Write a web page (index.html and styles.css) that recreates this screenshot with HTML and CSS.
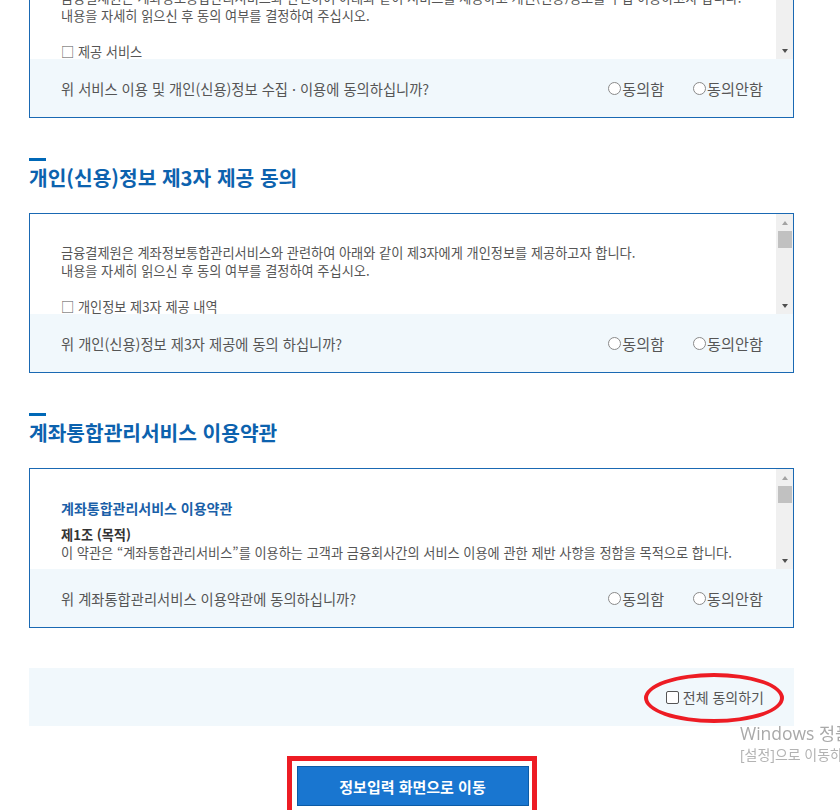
FILE: index.html
```html
<!DOCTYPE html>
<html lang="ko">
<head>
    <meta charset="UTF-8">
    <meta name="viewport" content="width=device-width, initial-scale=1.0">
    <title>계좌정보통합관리서비스 약관 동의</title>
    <link rel="stylesheet" href="styles.css">
</head>
<body>
    <div class="container">
        <form id="agreeForm">
            <section class="terms-section">
                <h3 class="section-title">개인(신용)정보 수집·이용 동의</h3>
                <div class="terms-box">
                    <div class="terms-scroll">
                        <div class="terms-body">
                            <p>금융결제원은 계좌정보통합관리서비스와 관련하여 아래와 같이 서비스를 제공하고 개인(신용)정보를 수집·이용하고자 합니다.<br>내용을 자세히 읽으신 후 동의 여부를 결정하여 주십시오.</p>
                            <p class="terms-item">□ 제공 서비스<br>
                                - 금융회사에 개설된 본인 명의 계좌의 일괄 조회<br>
                                - 비활동성 계좌의 해지 및 잔고이전<br>
                                - 자동이체 조회·해지·변경 서비스 연계</p>
                            <p class="terms-item">□ 수집·이용 목적<br>
                                - 본인확인 및 계좌정보통합관리서비스 제공</p>
                            <p class="terms-item">□ 수집·이용 항목<br>
                                - 성명, 생년월일, 휴대폰번호, 통신사, 계좌정보</p>
                            <p class="terms-item">□ 보유·이용 기간<br>
                                - 서비스 이용 종료 시까지 (관계 법령에 따라 보존이 필요한 경우 해당 기간까지)</p>
                        </div>
                        <div class="scrollbar" aria-hidden="true">
                            <span class="scroll-btn up"></span>
                            <span class="scroll-track"><span class="scroll-thumb"></span></span>
                            <span class="scroll-btn down"></span>
                        </div>
                    </div>
                    <div class="terms-agree">
                        <span class="agree-question">위 서비스 이용 및 개인(신용)정보 수집 · 이용에 동의하십니까?</span>
                        <div class="agree-options">
                            <label><input type="radio" name="agree1" value="Y">동의함</label>
                            <label><input type="radio" name="agree1" value="N">동의안함</label>
                        </div>
                    </div>
                </div>
            </section>

            <section class="terms-section">
                <h3 class="section-title">개인(신용)정보 제3자 제공 동의</h3>
                <div class="terms-box">
                    <div class="terms-scroll">
                        <div class="terms-body">
                            <p>금융결제원은 계좌정보통합관리서비스와 관련하여 아래와 같이 제3자에게 개인정보를 제공하고자 합니다.<br>내용을 자세히 읽으신 후 동의 여부를 결정하여 주십시오.</p>
                            <p class="terms-item">□ 개인정보 제3자 제공 내역<br>
                                - 제공받는 자 : 계좌정보통합관리서비스 참가 금융회사<br>
                                - 제공 목적 : 계좌정보 조회, 비활동성 계좌 해지 및 잔고이전<br>
                                - 제공 항목 : 성명, 생년월일, 휴대폰번호, 계좌번호<br>
                                - 보유 및 이용 기간 : 서비스 제공 완료 시까지</p>
                            <p class="terms-item">□ 동의를 거부할 권리 및 불이익<br>
                                - 동의를 거부하실 수 있으나, 거부 시 서비스 이용이 제한됩니다.</p>
                            <p class="terms-item">□ 기타<br>
                                - 제공된 정보는 제공 목적 외의 용도로 이용되지 않습니다.</p>
                        </div>
                        <div class="scrollbar" aria-hidden="true">
                            <span class="scroll-btn up"></span>
                            <span class="scroll-track"><span class="scroll-thumb"></span></span>
                            <span class="scroll-btn down"></span>
                        </div>
                    </div>
                    <div class="terms-agree">
                        <span class="agree-question">위 개인(신용)정보 제3자 제공에 동의 하십니까?</span>
                        <div class="agree-options">
                            <label><input type="radio" name="agree2" value="Y">동의함</label>
                            <label><input type="radio" name="agree2" value="N">동의안함</label>
                        </div>
                    </div>
                </div>
            </section>

            <section class="terms-section">
                <h3 class="section-title">계좌통합관리서비스 이용약관</h3>
                <div class="terms-box">
                    <div class="terms-scroll">
                        <div class="terms-body">
                            <p class="terms-title">계좌통합관리서비스 이용약관</p>
                            <div class="article">
                                <strong>제1조 (목적)</strong>
                                <p>이 약관은 “계좌통합관리서비스”를 이용하는 고객과 금융회사간의 서비스 이용에 관한 제반 사항을 정함을 목적으로 합니다.</p>
                            </div>
                            <div class="article">
                                <strong>제2조 (용어의 정의)</strong>
                                <p>① “계좌통합관리서비스”란 고객이 금융회사에 개설한 계좌를 일괄 조회하고 관리하는 서비스를 말합니다.<br>
                                    ② “비활동성 계좌”란 최근 1년 이상 입출금 거래가 없는 계좌를 말합니다.</p>
                            </div>
                            <div class="article">
                                <strong>제3조 (서비스의 내용)</strong>
                                <p>① 고객은 본인 명의 계좌의 조회, 해지 및 잔고이전 서비스를 이용할 수 있습니다.<br>
                                    ② 서비스의 세부 내용은 금융회사별로 다를 수 있습니다.</p>
                            </div>
                        </div>
                        <div class="scrollbar" aria-hidden="true">
                            <span class="scroll-btn up"></span>
                            <span class="scroll-track"><span class="scroll-thumb"></span></span>
                            <span class="scroll-btn down"></span>
                        </div>
                    </div>
                    <div class="terms-agree">
                        <span class="agree-question">위 계좌통합관리서비스 이용약관에 동의하십니까?</span>
                        <div class="agree-options">
                            <label><input type="radio" name="agree3" value="Y">동의함</label>
                            <label><input type="radio" name="agree3" value="N">동의안함</label>
                        </div>
                    </div>
                </div>
            </section>

            <div class="agree-all">
                <label class="agree-all-label"><input type="checkbox" id="agreeAll">전체 동의하기</label>
            </div>

            <div class="btn-area">
                <span class="btn-frame">
                    <button type="button" class="btn-next">정보입력 화면으로 이동</button>
                </span>
            </div>
        </form>
    </div>

    <div class="activation">
        <div class="activation-title">Windows 정품 인증</div>
        <div class="activation-desc">[설정]으로 이동하여 Windows를 정품 인증합니다.</div>
    </div>

    <script>
        // 약관 본문 스크롤에 맞춰 스크롤바 위치 갱신
        var boxes = document.querySelectorAll('.terms-scroll');
        for (var i = 0; i < boxes.length; i++) {
            (function (box) {
                var body = box.querySelector('.terms-body');
                var track = box.querySelector('.scroll-track');
                var thumb = box.querySelector('.scroll-thumb');
                function update() {
                    var max = body.scrollHeight - body.clientHeight;
                    var room = track.clientHeight - thumb.offsetHeight;
                    var top = max > 0 ? Math.round(body.scrollTop / max * room) : 0;
                    thumb.style.marginTop = top + 'px';
                }
                body.addEventListener('scroll', update);
                update();
            })(boxes[i]);
        }

        // 전체 동의 체크 시 모든 항목을 동의함으로 선택
        document.getElementById('agreeAll').addEventListener('change', function () {
            var radios = document.querySelectorAll('.agree-options input[value="Y"]');
            for (var i = 0; i < radios.length; i++) {
                radios[i].checked = this.checked;
            }
        });

        window.scrollTo(0, 137);
    </script>
</body>
</html>
```

FILE: styles.css
```css
html {
    overflow-x: hidden;
    scrollbar-width: none;
}

body {
    margin: 0;
    font-family: "Noto Sans CJK KR", "Malgun Gothic", sans-serif;
    font-size: 13.2px;
    color: #555;
    background: #fff;
}

.container {
    width: 765px;
    margin-left: 29px;
    padding: 40px 0 60px;
}

.terms-section + .terms-section {
    margin-top: 40px;
}

.section-title {
    margin: 0 0 22px;
    font-size: 20.3px;
    line-height: 27px;
    font-weight: bold;
    color: #0c62ae;
}

.section-title::before {
    content: "";
    display: block;
    width: 17px;
    height: 3px;
    margin-bottom: 3px;
    background: #0068b7;
}

.terms-box {
    border: 1px solid #1a69b3;
}

.terms-scroll {
    display: flex;
    height: 100px;
}

.terms-body {
    flex: 1;
    overflow-y: auto;
    scrollbar-width: none;
    padding: 30px 20px 30px 31px;
    line-height: 18px;
}

.terms-body p {
    margin: 0;
}

.terms-body .terms-item {
    margin-top: 18px;
}

.terms-body .terms-title {
    font-size: 14px;
    font-weight: bold;
    color: #1a5fa8;
    margin-bottom: 9px;
}

.article strong {
    display: block;
    color: #333;
}

.article + .article {
    margin-top: 9px;
}

/* 본문 옆 세로 스크롤바 */
.scrollbar {
    display: flex;
    flex-direction: column;
    width: 17px;
    background: #f0f0f0;
}

.scroll-btn {
    display: flex;
    align-items: center;
    justify-content: center;
    height: 17px;
}

.scroll-btn::before {
    content: "";
    border-left: 3.5px solid transparent;
    border-right: 3.5px solid transparent;
}

.scroll-btn.up::before {
    border-bottom: 4px solid #a3a3a3;
}

.scroll-btn.down::before {
    border-top: 4px solid #505050;
}

.scroll-track {
    flex: 1;
}

.scroll-thumb {
    display: block;
    height: 17px;
    margin: 0 1px 0 2px;
    background: #c1c1c1;
}

.terms-agree {
    display: flex;
    align-items: center;
    justify-content: space-between;
    height: 58px;
    padding: 0 30px 0 31px;
    background: #f1f8fc;
    font-size: 14.3px;
}

.agree-options {
    display: flex;
    gap: 29px;
    font-size: 15.2px;
}

.agree-options label {
    display: flex;
    align-items: center;
    gap: 1px;
}

.agree-options input {
    appearance: none;
    box-sizing: border-box;
    width: 13px;
    height: 13px;
    margin: 0;
    border: 1px solid #8a8a8a;
    border-radius: 50%;
    background: #fff;
}

.agree-options input:checked {
    background: radial-gradient(#333 0 3px, #fff 3.5px);
}

.agree-all {
    display: flex;
    align-items: center;
    justify-content: flex-end;
    height: 58px;
    margin-top: 40px;
    padding-right: 30px;
    background: #f1f8fc;
    font-size: 14px;
}

.agree-all-label {
    position: relative;
    display: flex;
    align-items: center;
    gap: 4px;
    line-height: 19px;
}

.agree-all-label input {
    appearance: none;
    box-sizing: border-box;
    width: 13px;
    height: 13px;
    margin: 0;
    border: 1px solid #555;
    border-radius: 2px;
    background: #fff;
}

/* 강조 표시 */
.agree-all-label::after {
    content: "";
    position: absolute;
    top: -15px;
    bottom: -16px;
    left: -22px;
    right: -20px;
    border: 4px solid #ed1c24;
    border-radius: 50%;
}

.btn-area {
    margin-top: 30px;
    text-align: center;
}

.btn-frame {
    display: inline-flex;
    border: 5px solid #ed1c24;
    padding: 5px 3px 5px 5px;
}

.btn-next {
    width: 232px;
    height: 40px;
    border: 1px solid #0b5ba6;
    background: #1976d0;
    color: #fff;
    font-family: inherit;
    font-size: 15px;
    font-weight: bold;
    cursor: pointer;
}

.activation {
    position: fixed;
    left: 740px;
    top: 721px;
    white-space: nowrap;
    color: #a9a9a9;
    font-family: "Open Sans", "Noto Sans CJK KR", sans-serif;
    pointer-events: none;
}

.activation-title {
    font-size: 17.5px;
    line-height: 24px;
}

.activation-desc {
    font-size: 14px;
    line-height: 20px;
    color: #b3b3b3;
}
```
